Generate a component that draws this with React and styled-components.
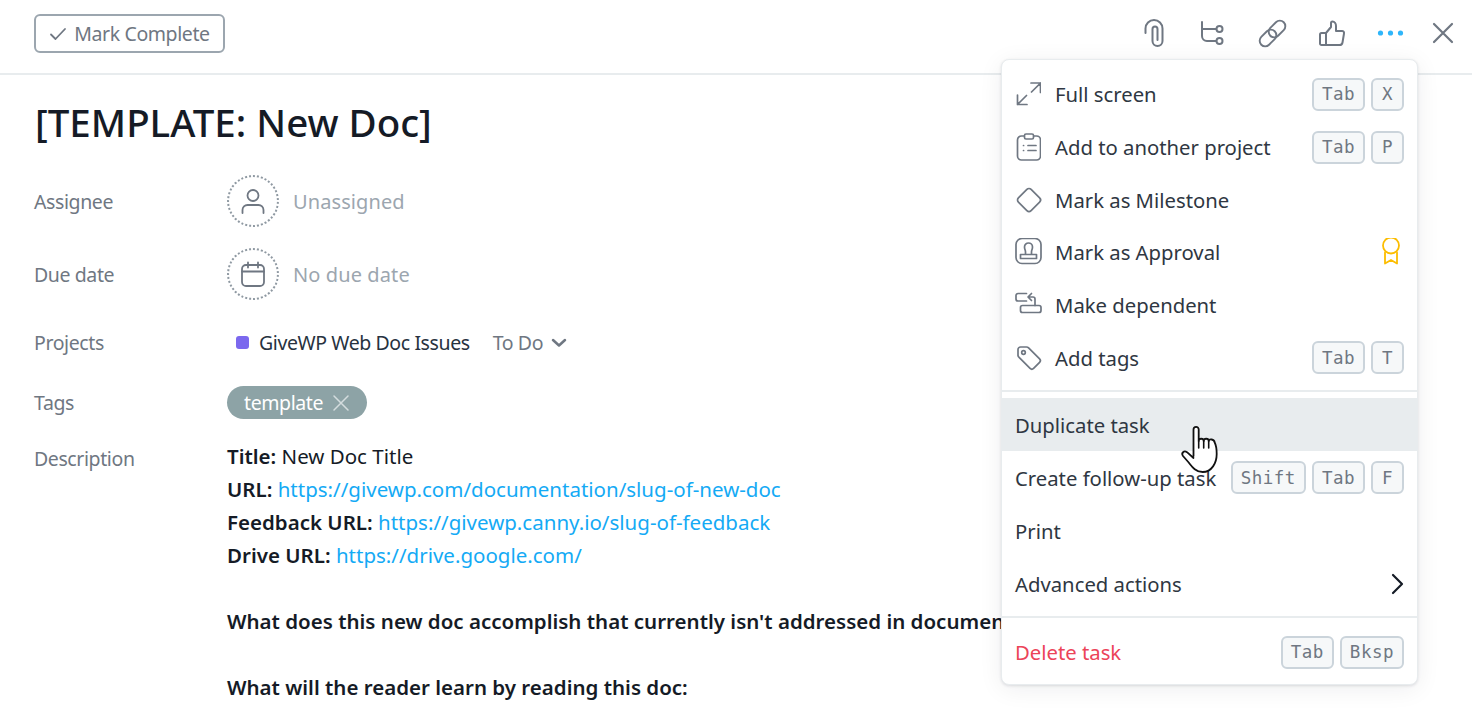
import styled, { createGlobalStyle } from 'styled-components';

const GlobalStyle = createGlobalStyle`
	html, body {
		margin: 0;
		padding: 0;
		background: #fff;
		overflow: hidden;
	}
	body {
		font-family: 'Noto Sans', 'Open Sans', sans-serif;
		color: #151b26;
	}
`;

const Page = styled.div`
	position: relative;
	width: 1472px;
	height: 718px;
	overflow: hidden;
`;

const TopBar = styled.div`
	height: 75px;
	display: flex;
	align-items: center;
	justify-content: space-between;
	padding: 0 18px 6px 34px;
	box-sizing: border-box;
	border-bottom: 2px solid #e8ecee;
`;

const CompleteButton = styled.button`
	width: 191px;
	height: 39px;
	display: flex;
	align-items: center;
	justify-content: center;
	gap: 7px;
	padding: 0;
	background: #fff;
	border: 2px solid #9ca6af;
	border-radius: 6px;
	font: inherit;
	font-size: 19.5px;
	color: #6f7782;
	letter-spacing: -0.4px;
`;

const Actions = styled.div`
	display: flex;
	align-items: center;
	gap: 27px;
	padding-bottom: 2px;
`;

const CloseSlot = styled.span`
	margin-left: -2px;
`;

const Glyph = styled.svg`
	display: block;
	flex: none;
	fill: none;
	stroke: ${(p) => p.$color || '#6f7782'};
	stroke-width: ${(p) => p.$weight || 2};
	stroke-linecap: round;
	stroke-linejoin: round;
`;

const Body = styled.div`
	padding: 22px 34px 0;
`;

const Title = styled.h1`
	margin: 0 0 28px 1px;
	font-size: 38.5px;
	line-height: 50px;
	font-weight: 500;
	letter-spacing: 0;
`;

const Field = styled.div`
	display: grid;
	grid-template-columns: 193px 1fr;
	align-items: ${(p) => (p.$top ? 'start' : 'center')};
	min-height: ${(p) => p.$height || 52}px;
	margin-bottom: ${(p) => p.$gap || 0}px;
`;

const Label = styled.div`
	font-size: 19.5px;
	line-height: 33px;
	color: #6f7782;
	letter-spacing: -0.4px;
	padding-top: ${(p) => p.$drop || 0}px;
`;

const Value = styled.div`
	display: flex;
	align-items: center;
	font-size: 19.5px;
	letter-spacing: -0.4px;
`;

const DashedCircle = styled.div`
	width: 52px;
	height: 52px;
	box-sizing: border-box;
	border: 2px dotted #8f99a2;
	border-radius: 50%;
	display: flex;
	align-items: center;
	justify-content: center;
	margin-right: 14px;
`;

const Placeholder = styled.span`
	color: #9ca6af;
	font-size: 20px;
	letter-spacing: 0.1px;
`;

const ProjectDot = styled.span`
	width: 13px;
	height: 13px;
	border-radius: 3px;
	background: #7b68ee;
	margin: 0 10px 0 9px;
`;

const ProjectName = styled.span`
	color: #273240;
	margin-right: 23px;
`;

const Section = styled.span`
	color: #6f7782;
	margin-right: 8px;
`;

const TagPill = styled.div`
	height: 33px;
	width: 140px;
	box-sizing: border-box;
	padding-left: 17px;
	display: flex;
	align-items: center;
	gap: 9px;
	border-radius: 17px;
	background: #8da3a6;
	color: #fff;
`;

const Description = styled.div`
	font-size: 20.5px;
	line-height: 33px;
	white-space: nowrap;

	b {
		font-weight: 600;
	}
`;

const Line = styled.div`
	min-height: 33px;
`;

const Link = styled.a`
	color: #14aaf5;
	text-decoration: none;
`;

const Menu = styled.div`
	position: absolute;
	left: 1001px;
	top: 59px;
	width: 417px;
	height: 626px;
	box-sizing: border-box;
	padding: 8px 0 0;
	background: #fff;
	border: 1px solid #e8ecee;
	border-radius: 8px;
	box-shadow: 0 1px 3px rgba(21, 27, 38, 0.12), 0 4px 24px rgba(21, 27, 38, 0.07);
`;

const Row = styled.div`
	height: ${(p) => (p.$lower ? '52.8px' : '52.7px')};
	box-sizing: border-box;
	display: flex;
	align-items: center;
	padding: ${(p) => (p.$lower ? '2px' : '0')} 13px 0;
	font-size: 20.3px;
	color: ${(p) => (p.$danger ? '#ec4459' : '#2f3742')};
	background: ${(p) => (p.$hover ? '#e8ecee' : 'transparent')};
`;

const RowIcon = styled.span`
	width: 40px;
	flex: none;
	display: flex;
`;

const RowText = styled.span`
	flex: 1;
`;

const AwardSlot = styled.span`
	margin-right: 3px;
`;

const Keys = styled.span`
	display: flex;
	gap: 6px;
`;

const Key = styled.kbd`
	height: 33px;
	min-width: 33px;
	box-sizing: border-box;
	padding: 0 8px;
	display: flex;
	align-items: center;
	justify-content: center;
	border: 2px solid #cbd4db;
	border-radius: 6px;
	background: #f6f8f9;
	color: #6f7782;
	font-family: 'DejaVu Sans Mono', monospace;
	font-size: 17.5px;
	letter-spacing: 0.5px;
`;

const Divider = styled.div`
	height: 2px;
	margin: ${(p) => p.$margin};
	background: #e8ecee;
`;

const Pointer = styled.svg`
	position: absolute;
	left: 1175px;
	top: 420px;
`;

const CheckIcon = () => (
	<Glyph width="18" height="18" viewBox="0 0 18 18" $weight="1.8">
		<path d="M2 9.5l4.5 4.5L16 4" />
	</Glyph>
);

const ClipIcon = () => (
	<Glyph width="32" height="32" viewBox="1 0 32 32">
		<path d="M7.5 16V11.5a8.5 8.5 0 0 1 17 0V24a5 5 0 0 1-10 0V12a2.5 2.5 0 0 1 5 0V23" />
	</Glyph>
);

const BranchIcon = () => (
	<Glyph width="32" height="32" viewBox="1 0 32 32">
		<path d="M5 5v14a5 5 0 0 0 5 5h9M5 12h14" />
		<circle cx="22.5" cy="12" r="3" />
		<circle cx="22.5" cy="24" r="3" />
	</Glyph>
);

const ChainIcon = () => (
	<Glyph width="32" height="32" viewBox="1 0 32 32" $weight="1.9">
		<rect x="2.5" y="15.5" width="19" height="11" rx="5.5" transform="rotate(-45 12 21)" />
		<rect x="11.5" y="6.5" width="19" height="11" rx="5.5" transform="rotate(-45 21 12)" />
	</Glyph>
);

const ThumbIcon = () => (
	<Glyph width="32" height="32" viewBox="0 0 32 32">
		<path d="M10 16H5.5A1.5 1.5 0 0 0 4 17.5v9A1.5 1.5 0 0 0 5.5 28H10zM10 16l5-6V6a1.5 1.5 0 0 1 1.5-1.5C18.5 4.5 20 6.5 20 9v5h6a2 2 0 0 1 2 2.5l-1.5 9a3 3 0 0 1-3 2.5H10" />
	</Glyph>
);

const DotsIcon = () => (
	<Glyph width="32" height="32" viewBox="0.5 0 32 32" $color="none">
		<circle cx="6" cy="16" r="2.6" fill="#2fb6fa" />
		<circle cx="16" cy="16" r="2.6" fill="#2fb6fa" />
		<circle cx="26" cy="16" r="2.6" fill="#2fb6fa" />
	</Glyph>
);

const CloseIcon = () => (
	<Glyph width="22" height="22" viewBox="0 0 22 22" $weight="2.2">
		<path d="M2 2l18 18M20 2L2 20" />
	</Glyph>
);

const PersonIcon = () => (
	<Glyph width="26" height="26" viewBox="0 0 26 26" $weight="1.8">
		<circle cx="13" cy="7.5" r="5.5" />
		<path d="M2.5 25v-3a5 5 0 0 1 5-5h11a5 5 0 0 1 5 5v3" />
	</Glyph>
);

const CalendarIcon = () => (
	<Glyph width="26" height="26" viewBox="0 0 26 26" $weight="1.8">
		<rect x="2" y="4" width="22" height="21" rx="4" />
		<path d="M2 10.5h22M8 1.5v5M18 1.5v5" />
	</Glyph>
);

const ExpandIcon = () => (
	<Glyph width="26" height="26" viewBox="-1 0 26 26" $weight="1.7">
		<path d="M15 2h9.5v9.5M24.5 2L15.5 11M1.5 14v9.5H11M1.5 23.5L10.5 14.5" />
	</Glyph>
);

const ClipboardIcon = () => (
	<Glyph width="26" height="28" viewBox="-1 0 26 28" $weight="1.7">
		<rect x="1.5" y="3" width="23" height="24" rx="4" />
		<rect x="8.5" y="1" width="9" height="5" rx="1.5" fill="#fff" />
		<path d="M7.5 12.5h.1M7.5 17.5h.1M12 12.5h8M12 17.5h8" />
	</Glyph>
);

const DiamondIcon = () => (
	<Glyph width="28" height="28" viewBox="0 0 28 28" $weight="1.7">
		<rect x="5" y="5" width="18" height="18" rx="3" transform="rotate(45 14 14)" />
	</Glyph>
);

const StampIcon = () => (
	<Glyph width="28" height="28" viewBox="0 0 28 28" $weight="1.7">
		<rect x="1" y="0.5" width="25" height="25" rx="6" />
		<path d="M10.5 16.5V14C10.5 12 9.5 11.5 9.5 9A4 4 0 0 1 17.5 9C17.5 11.5 16.5 12 16.5 14V16.5M5.5 16.5h16v4h-16z" />
	</Glyph>
);

const DependentIcon = () => (
	<Glyph width="28" height="28" viewBox="0 0 28 28" $weight="1.7">
		<path d="M11.5 2.5H3a2 2 0 0 0-2 2V8a2 2 0 0 0 2 2h8.5" />
		<path d="M20 14.5V8a2 2 0 0 0-2-2h-4.5M16.5 2.5L13 6l3.5 3.5" />
		<rect x="5.5" y="14.5" width="20.5" height="7" rx="2" />
	</Glyph>
);

const TagIcon = () => (
	<Glyph width="28" height="28" viewBox="0 0 28 28" $weight="1.7">
		<path d="M3 5.5A2.5 2.5 0 0 1 5.5 3h6a3 3 0 0 1 2.1.9l11 11a2.5 2.5 0 0 1 0 3.5l-6 6a2.5 2.5 0 0 1-3.5 0l-11-11A3 3 0 0 1 3 11.5z" />
		<circle cx="8.5" cy="8.5" r="1.8" />
	</Glyph>
);

const AwardIcon = () => (
	<Glyph width="20" height="28" viewBox="0 1.5 20 28" $color="#fcbd01" $weight="1.8">
		<circle cx="10" cy="9" r="8" />
		<path d="M4 16v11l6-3.5 6 3.5V16" />
	</Glyph>
);

const ChevronDown = () => (
	<Glyph width="16" height="16" viewBox="0 0 16 16" $weight="2.5">
		<path d="M2 5l6 5.5L14 5" />
	</Glyph>
);

const ChevronRight = () => (
	<Glyph width="14" height="22" viewBox="0 0 14 22" $color="#151b26" $weight="2.2">
		<path d="M3 2l9 9-9 9" />
	</Glyph>
);

const TagClose = () => (
	<Glyph width="18" height="18" viewBox="0 0 18 18" $color="#d4dcde" $weight="1.5">
		<path d="M2 2l14 14M16 2L2 16" />
	</Glyph>
);

const iconRows = [
	{ icon: <ExpandIcon />, text: 'Full screen', keys: ['Tab', 'X'] },
	{ icon: <ClipboardIcon />, text: 'Add to another project', keys: ['Tab', 'P'] },
	{ icon: <DiamondIcon />, text: 'Mark as Milestone' },
	{ icon: <StampIcon />, text: 'Mark as Approval', award: true },
	{ icon: <DependentIcon />, text: 'Make dependent' },
	{ icon: <TagIcon />, text: 'Add tags', keys: ['Tab', 'T'] }
];

const KeyList = ({ keys }) => (
	<Keys>
		{keys.map((k) => (
			<Key key={k}>{k}</Key>
		))}
	</Keys>
);

const App = () => (
	<Page>
		<GlobalStyle />
		<TopBar>
			<CompleteButton>
				<CheckIcon />
				Mark Complete
			</CompleteButton>
			<Actions>
				<ClipIcon />
				<BranchIcon />
				<ChainIcon />
				<ThumbIcon />
				<DotsIcon />
				<CloseSlot>
					<CloseIcon />
				</CloseSlot>
			</Actions>
		</TopBar>
		<Body>
			<Title>[TEMPLATE: New Doc]</Title>
			<Field $gap={21}>
				<Label>Assignee</Label>
				<Value>
					<DashedCircle>
						<PersonIcon />
					</DashedCircle>
					<Placeholder>Unassigned</Placeholder>
				</Value>
			</Field>
			<Field $gap={26}>
				<Label>Due date</Label>
				<Value>
					<DashedCircle>
						<CalendarIcon />
					</DashedCircle>
					<Placeholder>No due date</Placeholder>
				</Value>
			</Field>
			<Field $height={33} $gap={27}>
				<Label>Projects</Label>
				<Value>
					<ProjectDot />
					<ProjectName>GiveWP Web Doc Issues</ProjectName>
					<Section>To Do</Section>
					<ChevronDown />
				</Value>
			</Field>
			<Field $height={33} $gap={21}>
				<Label>Tags</Label>
				<Value>
					<TagPill>
						template
						<TagClose />
					</TagPill>
				</Value>
			</Field>
			<Field $top>
				<Label $drop={2}>Description</Label>
				<Description>
					<Line><b>Title:</b> New Doc Title</Line>
					<Line><b>URL:</b> <Link>https://givewp.com/documentation/slug-of-new-doc</Link></Line>
					<Line><b>Feedback URL:</b> <Link>https://givewp.canny.io/slug-of-feedback</Link></Line>
					<Line><b>Drive URL:</b> <Link>https://drive.google.com/</Link></Line>
					<Line />
					<Line><b>What does this new doc accomplish that currently isn't addressed in documentation?</b></Line>
					<Line />
					<Line><b>What will the reader learn by reading this doc:</b></Line>
				</Description>
			</Field>
		</Body>
		<Menu>
			{iconRows.map((r) => (
				<Row key={r.text}>
					<RowIcon>{r.icon}</RowIcon>
					<RowText>{r.text}</RowText>
					{r.keys && <KeyList keys={r.keys} />}
					{r.award && (
						<AwardSlot>
							<AwardIcon />
						</AwardSlot>
					)}
				</Row>
			))}
			<Divider $margin="5.6px 0 6px" />
			<Row $hover $lower>
				<RowText>Duplicate task</RowText>
			</Row>
			<Row $lower>
				<RowText>Create follow-up task</RowText>
				<KeyList keys={['Shift', 'Tab', 'F']} />
			</Row>
			<Row $lower>
				<RowText>Print</RowText>
			</Row>
			<Row $lower>
				<RowText>Advanced actions</RowText>
				<ChevronRight />
			</Row>
			<Divider $margin="7px 0 8px" />
			<Row $danger>
				<RowText>Delete task</RowText>
				<KeyList keys={['Tab', 'Bksp']} />
			</Row>
		</Menu>
		<Pointer width="50" height="56" viewBox="0 0 50 56">
			<path
				d="M18.5 36V9.5a2.6 2.6 0 0 1 5.2 0V21c0-3 5-3 5 0 0-3 5-3 5 0 .5-2.5 5.5-2 6 1.5 1 2 2 4 2 11.5 0 9-5 18-14 18-7 0-10.5-5-14-9.5L8 36c-2.2-3 1-5.8 4-3.8l6.5 5.8"
				fill="#fff"
				stroke="#111"
				strokeWidth="1.8"
				strokeLinejoin="round"
				strokeLinecap="round"
			/>
			<path d="M23.7 21v7M28.7 21v7M33.7 21v7" fill="none" stroke="#111" strokeWidth="1.6" strokeLinecap="round" />
		</Pointer>
	</Page>
);

export default App;
